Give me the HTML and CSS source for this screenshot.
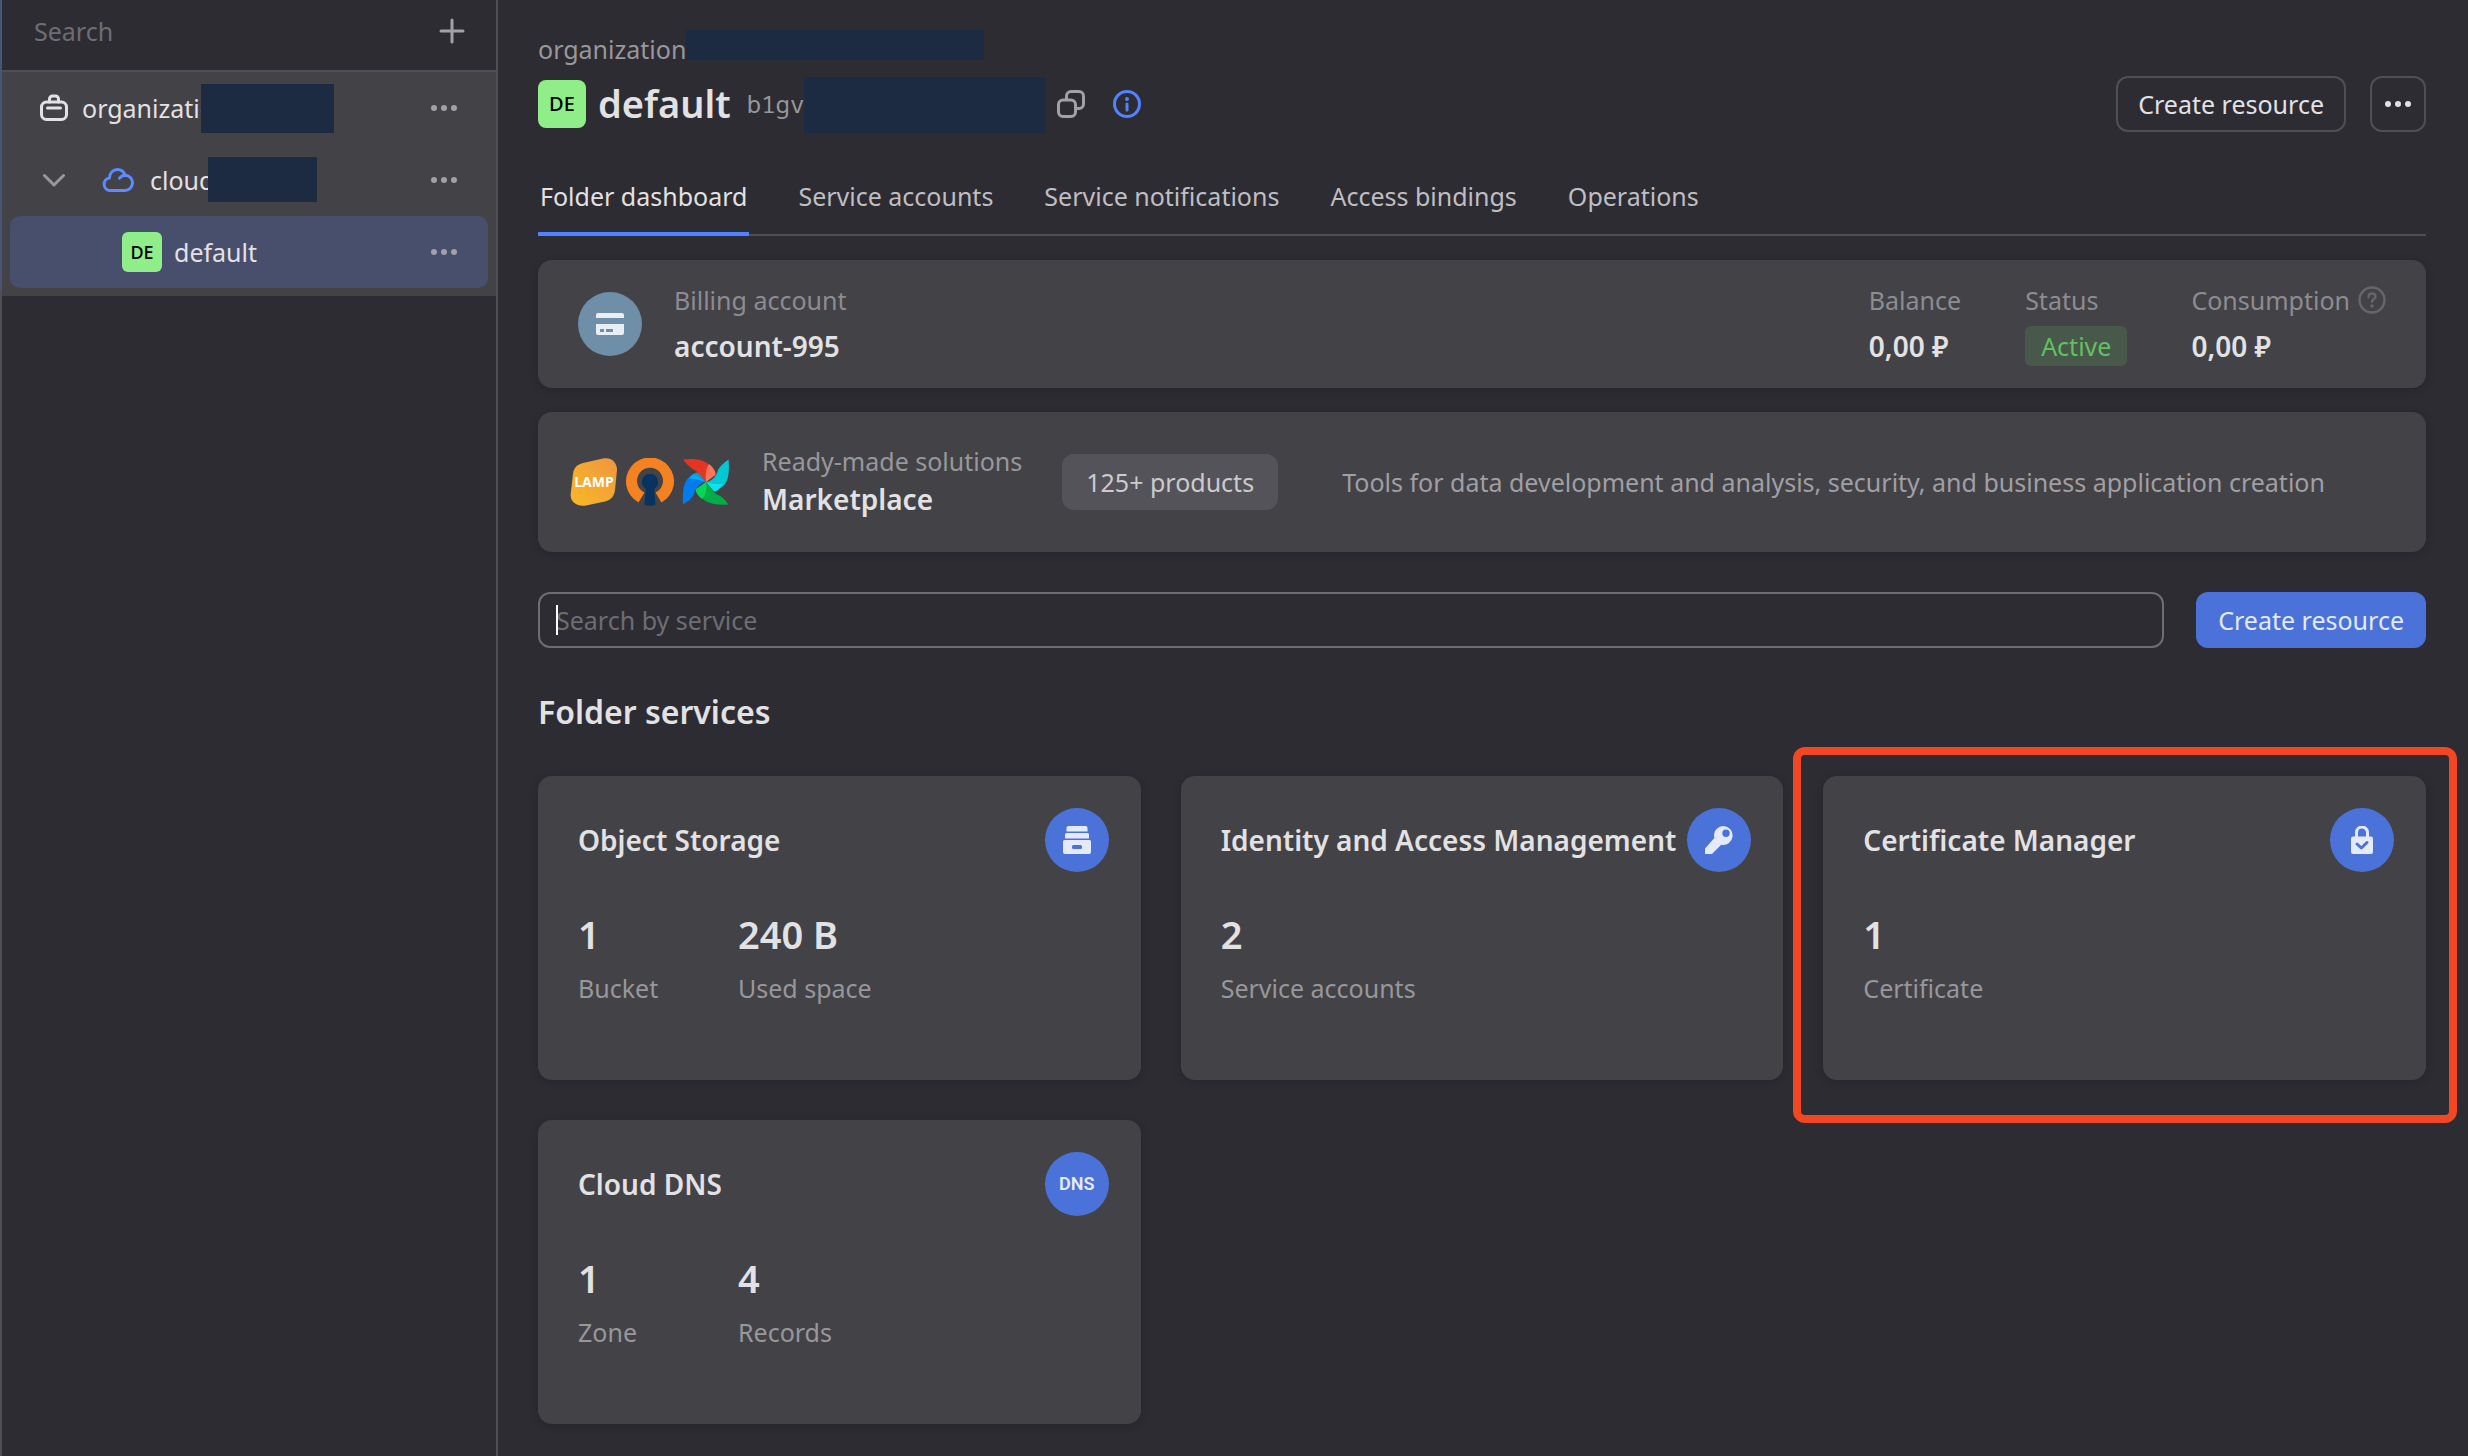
FILE: index.html
```html
<!DOCTYPE html>
<html lang="en">
<head>
<meta charset="utf-8">
<meta name="viewport" content="width=device-width, initial-scale=1">
<title>default – Folder dashboard</title>
<link rel="stylesheet" href="styles.css">
</head>
<body>
<svg class="sprite" aria-hidden="true">
  <symbol id="dots" viewBox="0 0 32 32">
    <circle cx="6" cy="16" r="3"/><circle cx="16" cy="16" r="3"/><circle cx="26" cy="16" r="3"/>
  </symbol>
</svg>

<div class="app">
  <aside class="sidebar">
    <div class="sidebar-head">
      <input class="sidebar-search" type="text" placeholder="Search" aria-label="Search resources">
      <button class="icon-button" type="button" aria-label="Add">
        <svg width="32" height="32" viewBox="0 0 32 32"><path d="M16 5v22M5 16h22" fill="none" stroke="currentColor" stroke-width="3" stroke-linecap="round"/></svg>
      </button>
    </div>
    <ul class="tree">
      <li class="tree-row">
        <svg class="org-icon" width="28" height="28" viewBox="0 0 28 28" fill="none" stroke="currentColor" stroke-width="3" stroke-linecap="round">
          <rect x="1.500" y="8" width="25" height="17.500" rx="5"/>
          <path d="M9.500 8V5a3 3 0 0 1 3-3h3a3 3 0 0 1 3 3v3M7.500 14h13"/>
        </svg>
        <a class="tree-name" href="#organization">organizatio<span class="mask mask-org"></span></a>
        <button class="icon-button" type="button" aria-label="Organization actions"><svg width="32" height="32"><use href="#dots"/></svg></button>
      </li>
      <li class="tree-row tree-row-cloud">
        <svg class="chevron" width="22" height="22" viewBox="0 0 22 22"><path d="M1.500 6.500 11 16l9.500-9.500" fill="none" stroke="currentColor" stroke-width="3" stroke-linecap="round" stroke-linejoin="round"/></svg>
        <svg class="cloud-icon" width="32" height="26" viewBox="0 0 32 26" fill="none" stroke="currentColor" stroke-width="3" stroke-linecap="round" stroke-linejoin="round">
          <path d="M8 23.500a6.300 6.300 0 0 1-.6-12.500C7.800 5.800 11.200 2.500 15.500 2.500c3.600 0 6.400 2.200 7.500 5.700 4.300.2 7.500 3.300 7.500 7.500 0 4.500-3.300 7.800-7.600 7.800zM17.500 11.300c1.200-1.900 3-2.900 5.500-3.100"/>
        </svg>
        <a class="tree-name" href="#cloud">cloud<span class="mask mask-cloud"></span></a>
        <button class="icon-button" type="button" aria-label="Cloud actions"><svg width="32" height="32"><use href="#dots"/></svg></button>
      </li>
      <li class="tree-row tree-row-folder">
        <span class="badge" aria-hidden="true">DE</span>
        <a class="tree-name" href="#default">default</a>
        <button class="icon-button" type="button" aria-label="Folder actions"><svg width="32" height="32"><use href="#dots"/></svg></button>
      </li>
    </ul>
  </aside>

  <main class="main">
    <div class="crumbs"><a href="#organization">organization</a><span class="crumb-mask"></span></div>

    <header class="title-row">
      <span class="badge badge-large" aria-hidden="true">DE</span>
      <h1>default</h1>
      <span class="folder-id">b1gv</span>
      <span class="id-mask"></span>
      <button class="icon-button small" type="button" aria-label="Copy ID">
        <svg width="28" height="28" viewBox="0 0 28 28" fill="none" stroke="currentColor" stroke-width="3">
          <rect x="1.500" y="10" width="17" height="16.500" rx="4.500"/>
          <path d="M9.500 9.500V6A4.500 4.500 0 0 1 14 1.500h8A4.500 4.500 0 0 1 26.500 6v8a4.500 4.500 0 0 1-4.500 4.500h-3"/>
        </svg>
      </button>
      <button class="icon-button small info" type="button" aria-label="Folder information">
        <svg width="28" height="28" viewBox="0 0 28 28"><circle cx="14" cy="14" r="12.500" fill="none" stroke="currentColor" stroke-width="3"/><circle cx="14" cy="9" r="2" fill="currentColor"/><path d="M14 14v6" stroke="currentColor" stroke-width="3" stroke-linecap="round"/></svg>
      </button>
      <div class="title-actions">
        <button class="button outlined" type="button">Create resource</button>
        <button class="button outlined square" type="button" aria-label="More actions"><svg width="32" height="32"><use href="#dots"/></svg></button>
      </div>
    </header>

    <nav class="tabs" aria-label="Folder sections">
      <a class="tab active" href="#dashboard" aria-current="page">Folder dashboard</a>
      <a class="tab" href="#accounts">Service accounts</a>
      <a class="tab" href="#notifications">Service notifications</a>
      <a class="tab" href="#bindings">Access bindings</a>
      <a class="tab" href="#operations">Operations</a>
    </nav>

    <section class="card billing">
      <span class="round-icon muted">
        <svg width="28" height="22" viewBox="0 0 28 22"><path fill="#e9eef3" d="M2 0h24a2 2 0 0 1 2 2v3H0V2a2 2 0 0 1 2-2z"/><path fill="#e9eef3" fill-rule="evenodd" d="M0 11h28v9a2 2 0 0 1-2 2H2a2 2 0 0 1-2-2zm4 5v3h4v-3zm6 0v3h7v-3z"/></svg>
      </span>
      <div class="pair">
        <span class="label">Billing account</span>
        <strong class="strong">account-995</strong>
      </div>
      <div class="billing-facts">
        <div class="pair"><span class="label">Balance</span><strong class="strong">0,00 ₽</strong></div>
        <div class="pair"><span class="label">Status</span><span class="status">Active</span></div>
        <div class="pair">
          <span class="label with-help">Consumption
            <svg width="28" height="28" viewBox="0 0 28 28"><circle cx="14" cy="14" r="12.500" fill="none" stroke="currentColor" stroke-width="2.500"/><path d="M10.500 11c0-2.200 1.500-3.500 3.500-3.500s3.500 1.300 3.500 3.200c0 2.300-3.500 2.500-3.500 5" fill="none" stroke="currentColor" stroke-width="2.500" stroke-linecap="round"/><circle cx="14" cy="20" r="1.700" fill="currentColor"/></svg>
          </span>
          <strong class="strong">0,00 ₽</strong>
        </div>
      </div>
    </section>

    <section class="card market">
      <div class="logos" aria-hidden="true">
        <svg width="48" height="48" viewBox="0 0 48 48">
          <defs><linearGradient id="lamp" x1="0" y1="1" x2="1" y2="0"><stop offset="0" stop-color="#f8b827"/><stop offset="1" stop-color="#ef963f"/></linearGradient></defs>
          <path fill="url(#lamp)" d="M13 5 33 .5C41-1 47 4 47 12l-2 20c-.7 6-4 10-10 11.500L16 47.500C7 49 0 44 .7 36L3 16C3.700 10 7 6.500 13 5z"/>
          <text class="lamp-text" x="24" y="29" text-anchor="middle">LAMP</text>
        </svg>
        <svg width="48" height="48" viewBox="0 0 48 48">
          <path fill="#f58220" d="M12.500 44.500A24 24 0 1 1 35.500 44.500L29.500 34.500A13 13 0 1 0 18.500 34.500z"/>
          <path fill="#063360" d="M24 16a8 8 0 0 1 4.200 14.800L29.500 47q-5.500 1.500-11 0l1.300-16.200A8 8 0 0 1 24 16z"/>
        </svg>
        <svg width="48" height="48" viewBox="0 0 48 48">
          <path fill="#e53522" d="M1 1.500C17-.5 28 3 30 13L24 24C18 18 17 14 12 12 8 9 4 6 1 1.500z"/>
          <path fill="#ff7557" d="M27 6C32 10 34 14 33.500 17L24 24C23 17 24 10 27 6z"/>
          <path fill="#04c7d4" d="M46.500 1.500C48 16 46 29 35.500 31L24 24c7-1 11-7 12-12 2-4 6-7 10.500-10.500z"/>
          <path fill="#11e1ee" d="M41 25c-3 6-6 8.500-9 8.500L24 24c7 2 13 3 17 1z"/>
          <path fill="#017cee" d="M1 46.500C0 31 2 20 12 16l12 8c-7 1-11 7-12 12-2 5-6 7-11 10.500z"/>
          <path fill="#00c7f7" fill-opacity=".65" d="M7 21c3-5 6-7 9-6.500L24 24C17 22 11 20 7 21z"/>
          <path fill="#00ad46" d="M46.500 46.500C31 48 20 44 17 35l7-11c6 6 7 11 12 13 5 2 7 5 10.500 9.500z"/>
          <path fill="#04d659" d="M20 41c-5-4-6.500-7-6-10L24 24c1 7 0 13-4 17z"/>
        </svg>
      </div>
      <div class="market-text">
        <span class="label bright">Ready-made solutions</span>
        <strong class="strong">Marketplace</strong>
      </div>
      <button class="button filled" type="button">125+ products</button>
      <p class="market-note">Tools for data development and analysis, security, and business application creation</p>
    </section>

    <form class="search-row">
      <div class="search-box">
        <input type="text" placeholder="Search by service" aria-label="Search by service">
        <span class="caret"></span>
      </div>
      <button class="button primary" type="button">Create resource</button>
    </form>

    <h2>Folder services</h2>

    <div class="services">
      <article class="card service">
        <div class="service-head">
          <h3>Object Storage</h3>
          <span class="round-icon">
            <svg width="28" height="28" viewBox="0 0 28 28"><path fill="#e4eafb" fill-rule="evenodd" d="M5.500 0h17a2 2 0 0 1 2 2v3.500h-21V2a2 2 0 0 1 2-2zM3.500 7h21a1.500 1.500 0 0 1 1.500 1.500v4H2v-4A1.500 1.500 0 0 1 3.500 7zM1.500 14h25A1.500 1.500 0 0 1 28 15.500V26a2 2 0 0 1-2 2H2a2 2 0 0 1-2-2V15.500A1.500 1.500 0 0 1 1.500 14zM10.500 19A1.500 1.500 0 0 0 9 20.500v1a1.500 1.500 0 0 0 1.500 1.500h7a1.500 1.500 0 0 0 1.500-1.500v-1a1.500 1.500 0 0 0-1.500-1.500z"/></svg>
          </span>
        </div>
        <dl class="stats">
          <div class="stat"><dt>Bucket</dt><dd>1</dd></div>
          <div class="stat"><dt>Used space</dt><dd>240 B</dd></div>
        </dl>
      </article>
      <article class="card service">
        <div class="service-head">
          <h3>Identity and Access Management</h3>
          <span class="round-icon">
            <svg width="28" height="28" viewBox="0 0 28 28"><path fill="#e4eafb" fill-rule="evenodd" d="M18.500 0a9.500 9.500 0 1 1-2.300 18.800L7 28H0v-5.500L9.400 12A9.500 9.500 0 0 1 18.500 0zM21 3.500a3.700 3.700 0 1 0 0 7.400 3.700 3.700 0 0 0 0-7.400z"/></svg>
          </span>
        </div>
        <dl class="stats">
          <div class="stat"><dt>Service accounts</dt><dd>2</dd></div>
        </dl>
      </article>
      <article class="card service highlighted">
        <div class="service-head">
          <h3>Certificate Manager</h3>
          <span class="round-icon">
            <svg width="28" height="28" viewBox="0 0 28 28"><path d="M8.500 12V6.500a5.500 5.500 0 0 1 11 0V12" fill="none" stroke="#e4eafb" stroke-width="3"/><rect x="3" y="10.500" width="22" height="17.500" rx="2" fill="#e4eafb"/><path d="M9 18l4.300 4L19 16.500" fill="none" stroke="#4a72d9" stroke-width="3" stroke-linecap="round" stroke-linejoin="round"/></svg>
          </span>
        </div>
        <dl class="stats">
          <div class="stat"><dt>Certificate</dt><dd>1</dd></div>
        </dl>
      </article>
      <article class="card service">
        <div class="service-head">
          <h3>Cloud DNS</h3>
          <span class="round-icon dns">DNS</span>
        </div>
        <dl class="stats">
          <div class="stat"><dt>Zone</dt><dd>1</dd></div>
          <div class="stat"><dt>Records</dt><dd>4</dd></div>
        </dl>
      </article>
    </div>
  </main>
</div>
</body>
</html>
```
FILE: styles.css
```css
:root {
  --page: #2d2c33;
  --surface: #434247;
  --line: #504f55;
  --text: #e2e1e3;
  --muted: #98979b;
  --dim: #6e6d72;
  --blue: #4a72d9;
  --mask: #1d2b42;
}

* { box-sizing: border-box; }

body {
  margin: 0;
  background: var(--page);
  color: var(--text);
  font: 25px/40px "Noto Sans", "Open Sans", sans-serif;
}

h1, h2, h3, p, ul, dl, dd { margin: 0; padding: 0; }
a { color: inherit; text-decoration: none; }
svg { display: block; flex: none; }
button, input { font: inherit; color: inherit; }
.sprite { position: absolute; width: 0; height: 0; }

.app {
  display: grid;
  grid-template-columns: 498px minmax(0, 1fr);
  min-height: 100vh;
}

/* Sidebar */
.sidebar {
  position: relative;
  border: solid var(--line);
  border-width: 0 2px;
}
.sidebar::before {
  content: "";
  position: absolute;
  top: 0;
  left: -2px;
  width: 2px;
  height: 290px;
  background: #4a5478;
}
.sidebar-head {
  display: flex;
  align-items: center;
  height: 72px;
  padding: 0 28px 8px 32px;
  border-bottom: 2px solid var(--line);
}
.sidebar-search {
  flex: 1;
  min-width: 0;
  padding: 0;
  border: 0;
  background: none;
  outline: none;
}
input::placeholder { color: var(--dim); opacity: 1; }

.icon-button {
  display: flex;
  padding: 0;
  border: 0;
  background: none;
  color: #a2a1a5;
  fill: currentColor;
  cursor: pointer;
}
.icon-button.small svg { fill: none; }

.tree {
  padding: 0 8px 8px;
  background: var(--surface);
  list-style: none;
}
.tree-row {
  display: flex;
  align-items: center;
  height: 72px;
  padding: 0 28px 0 30px;
  border-radius: 10px;
}
.tree-name {
  position: relative;
  flex: 1;
  margin-left: 14px;
}
.chevron { margin-left: 3px; color: var(--muted); }
.cloud-icon { margin-left: 37px; color: #5c8cff; }
.tree-row-cloud .tree-name { margin-left: 16px; }
.tree-row-folder {
  padding-left: 112px;
  background: #484f6c;
}
.tree-row-folder .tree-name { margin-left: 12px; }

.mask {
  position: absolute;
  top: -4px;
  height: 49px;
  background: var(--mask);
}
.mask-org { left: 119px; width: 133px; }
.mask-cloud { top: -3px; left: 58px; width: 109px; height: 45px; }

.badge {
  display: flex;
  align-items: center;
  justify-content: center;
  width: 40px;
  height: 40px;
  border-radius: 6px;
  background: #8fee88;
  color: #000;
  font-size: 18px;
  font-weight: 500;
}
.badge-large {
  width: 48px;
  height: 48px;
  border-radius: 8px;
  font-size: 20px;
}

/* Page header */
.main { padding: 30px 42px 32px 40px; }

.crumbs {
  display: flex;
  height: 38px;
  color: var(--muted);
  line-height: 38px;
}
.crumb-mask { width: 298px; height: 30px; background: var(--mask); }

.title-row {
  display: flex;
  align-items: center;
  height: 56px;
  margin-top: 8px;
}
h1 {
  margin-left: 12px;
  padding-bottom: 2px;
  font-size: 38px;
  font-weight: 600;
}
.folder-id {
  margin-left: 16px;
  color: var(--muted);
  font-family: "Noto Sans Mono", "Liberation Mono", monospace;
  font-size: 24px;
}
.id-mask { width: 241px; height: 56px; margin: 2px 12px 0 0; background: var(--mask); }
.info { margin-left: 28px; color: #5282ff; }
.title-actions { display: flex; gap: 24px; margin-left: auto; }

.button {
  display: flex;
  align-items: center;
  justify-content: center;
  flex: none;
  height: 56px;
  padding: 0 22px;
  border: 0;
  border-radius: 12px;
  background: none;
  cursor: pointer;
}
.button.outlined { padding: 0 20px; border: 2px solid var(--line); }
.button.square { width: 56px; padding: 0; fill: currentColor; }
.button.filled { padding: 0 24px; background: #545359; color: #cbcacd; }
.button.primary { background: var(--blue); color: #e3e9fb; }

.tabs {
  display: flex;
  gap: 47px;
  margin-top: 28px;
  box-shadow: inset 0 -2px var(--line);
}
.tab {
  padding: 0 2px;
  border-bottom: 4px solid transparent;
  color: #bfbec1;
  line-height: 72px;
}
.tab.active { border-color: #5282ff; color: var(--text); }

/* Cards */
.card {
  border-radius: 14px;
  background: var(--surface);
  box-shadow: 0 2px 10px rgba(0, 0, 0, .16);
}
.label { color: #8d8c91; }
.label.bright { color: var(--muted); }
.strong { font-size: 28px; font-weight: 600; }

.round-icon {
  display: flex;
  align-items: center;
  justify-content: center;
  flex: none;
  width: 64px;
  height: 64px;
  border-radius: 50%;
  background: var(--blue);
}
.round-icon.muted { background: #6f8fa9; }

.billing {
  display: flex;
  align-items: center;
  margin-top: 24px;
  padding: 20px 40px;
}
.pair {
  display: flex;
  flex-direction: column;
  align-items: flex-start;
  gap: 6px;
  padding-bottom: 2px;
}
.billing > .pair { margin-left: 32px; }
.billing-facts { display: flex; gap: 64px; margin-left: auto; }
.with-help { display: flex; align-items: center; gap: 8px; }
.with-help svg { color: #66656a; }
.status {
  padding: 0 16px;
  border-radius: 6px;
  background: #48594c;
  color: #62c063;
}

.market {
  display: flex;
  align-items: center;
  margin-top: 24px;
  padding: 30px 40px 30px 32px;
}
.logos { display: flex; gap: 8px; }
.lamp-text { fill: #fff; font-size: 14px; font-weight: 700; }
.market-text {
  display: flex;
  flex-direction: column;
  margin: 0 40px 0 32px;
  padding-bottom: 4px;
  line-height: 38px;
}
.market-note { margin-left: 64px; color: #a09fa3; }

.search-row { display: flex; gap: 32px; margin-top: 40px; }
.search-box { position: relative; flex: 1; }
.search-box input {
  width: 100%;
  height: 56px;
  padding: 0 16px;
  border: 2px solid #6e6d72;
  border-radius: 12px;
  background: none;
  outline: none;
}
.caret {
  position: absolute;
  top: 13px;
  left: 18px;
  width: 2px;
  height: 30px;
  background: #fff;
}

h2 { margin: 44px 0; font-size: 32px; font-weight: 600; }

.services {
  display: grid;
  grid-template-columns: repeat(3, minmax(0, 1fr));
  gap: 40px;
}
.service { position: relative; padding: 32px 32px 72px 40px; }
.service-head { display: flex; align-items: center; justify-content: space-between; }
h3 { font-size: 28px; font-weight: 600; white-space: nowrap; }
.dns {
  color: #e4eafb;
  font-family: Roboto, "Noto Sans", sans-serif;
  font-size: 18px;
  font-weight: 600;
}
.stats { display: flex; margin-top: 36px; }
.stat {
  display: flex;
  flex-direction: column-reverse;
  gap: 8px;
  min-width: 160px;
}
.stat dt { color: var(--muted); }
.stat dd { font-size: 38px; font-weight: 600; line-height: 52px; }

.highlighted::after {
  content: "";
  position: absolute;
  inset: -29px -31px -43px -30px;
  border: 8px solid #f34722;
  border-radius: 12px;
  pointer-events: none;
}
```
